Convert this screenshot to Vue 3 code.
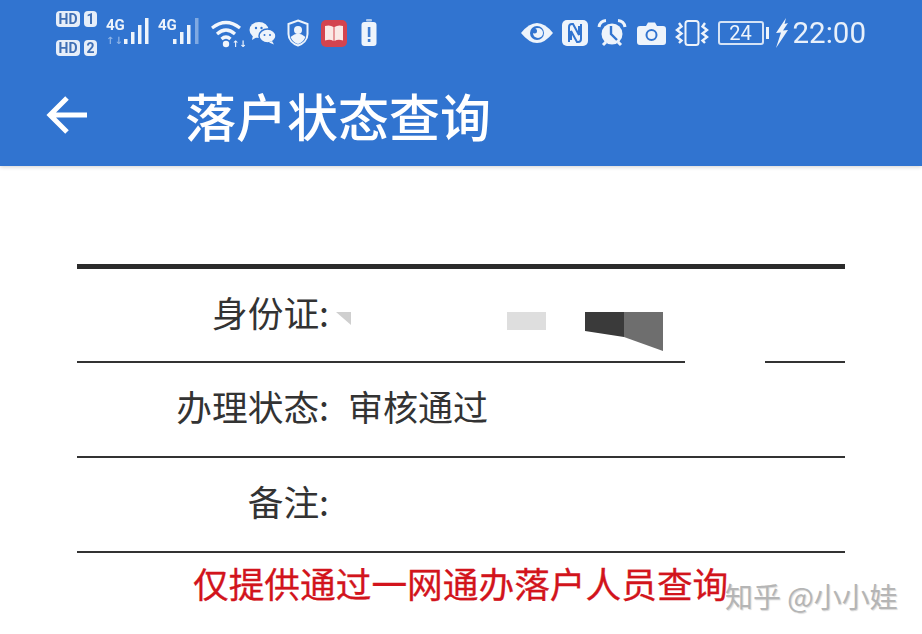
<script setup>
const rows = [
  { label: '身份证:', value: '' },
  { label: '办理状态:', value: '审核通过' },
  { label: '备注:', value: '' },
]
</script>

<template>
  <main class="page">
    <header class="head">
      <div class="status">
        <div class="left">
          <div class="sims">
            <div class="sim"><span class="hd">HD</span><span class="num">1</span></div>
            <div class="sim"><span class="hd">HD</span><span class="num">2</span></div>
          </div>
          <svg class="sig" width="46" height="36" viewBox="0 0 46 36">
            <text x="0" y="15" class="g">4G</text>
            <text x="0" y="29" class="arrows">↑↓</text>
            <g fill="#eef4fb">
              <rect x="18" y="24" width="3.500" height="5" />
              <rect x="25" y="17" width="3.500" height="12" />
              <rect x="32" y="10" width="3.500" height="19" />
              <rect x="39" y="3" width="3.500" height="26" />
            </g>
          </svg>
          <svg class="sig sig2" width="46" height="36" viewBox="0 0 46 36">
            <text x="0" y="15" class="g">4G</text>
            <g fill="#eef4fb">
              <rect x="15" y="24" width="3.500" height="5" />
              <rect x="22" y="17" width="3.500" height="12" />
              <rect x="29" y="10" width="3.500" height="19" />
            </g>
            <rect x="37" y="3" width="3.500" height="26" fill="#7fa9e2" />
          </svg>
          <svg class="wifi" width="36" height="30" viewBox="0 0 36 30">
            <g fill="none" stroke="#f2f6fc" stroke-width="3.200">
              <path d="M2 10Q16-1 30 10" />
              <path d="M7 16Q16 8 25 16" />
              <path d="M11.500 21Q16 17 20.500 21" />
            </g>
            <circle cx="16" cy="26" r="3.200" fill="#f2f6fc" />
            <text x="22" y="29" class="wifi-arrows">↑↓</text>
          </svg>
          <svg class="wechat" width="28" height="24" viewBox="0 0 28 24">
            <ellipse cx="10" cy="9" rx="9.500" ry="8" fill="#eef4fb" />
            <path d="M4 14l-1 5 5-3z" fill="#eef4fb" />
            <ellipse cx="18.500" cy="15" rx="8.500" ry="7" fill="#eef4fb" stroke="#3174d0" stroke-width="1.500" />
            <path d="M23 20l2 3.500-5-2z" fill="#eef4fb" />
            <g fill="#3174d0">
              <circle cx="7" cy="7" r="1.200" />
              <circle cx="12.500" cy="7" r="1.200" />
              <circle cx="15.500" cy="14" r="1" />
              <circle cx="21" cy="14" r="1" />
            </g>
          </svg>
          <svg class="shield" width="22" height="28" viewBox="0 0 22 28">
            <path d="M11 1.500L20.500 5V15C20.500 21 16 25 11 26.500 6 25 1.500 21 1.500 15V5Z" fill="none" stroke="#eef4fb" stroke-width="2" />
            <circle cx="11" cy="11" r="4" fill="#eef4fb" />
            <path d="M3.500 18Q11 11 18.500 18 16 23.500 11 25 6 23.500 3.500 18Z" fill="#eef4fb" />
          </svg>
          <svg class="book" width="26" height="27" viewBox="0 0 26 27">
            <rect width="26" height="27" rx="5" fill="#d3444f" />
            <path d="M4 6Q9 4.500 12.500 7V21Q9 19 4 20.500Z" fill="#fae9e6" />
            <path d="M22 6Q17 4.500 13.500 7V21Q17 19 22 20.500Z" fill="#fae9e6" />
          </svg>
          <svg class="batt" width="16" height="28" viewBox="0 0 16 28">
            <rect x="5" y="0" width="6" height="2.500" rx="1" fill="#a9c6ec" />
            <rect x="0.500" y="3" width="15" height="24" rx="3" fill="#eef4fb" />
            <rect x="6.800" y="8" width="2.600" height="10" fill="#3f7dd3" />
            <rect x="6.800" y="20" width="2.600" height="3" fill="#3f7dd3" />
          </svg>
        </div>
        <div class="right">
          <svg class="eye" width="34" height="22" viewBox="0 0 34 22">
            <path d="M1 11Q17-9 33 11 17 31 1 11Z" fill="#eef4fb" />
            <circle cx="17" cy="11" r="7" fill="#3174d0" />
            <circle cx="18" cy="11" r="5" fill="#eef4fb" />
            <circle cx="14.500" cy="9" r="2.500" fill="#3174d0" />
          </svg>
          <svg class="nfc" width="26" height="26" viewBox="0 0 26 26">
            <rect width="26" height="26" rx="5" fill="#eef4fb" />
            <path d="M7 22V7Q7 4 10 4H11L17 15V6" fill="none" stroke="#3174d0" stroke-width="2" />
            <path d="M19 4V19Q19 22 16 22H15L9 11V20" fill="none" stroke="#3174d0" stroke-width="2" />
          </svg>
          <svg class="alarm" width="30" height="28" viewBox="0 0 30 28">
            <circle cx="15" cy="15" r="10.500" fill="#eef4fb" />
            <path d="M14 7V15L20 21" fill="none" stroke="#3174d0" stroke-width="2.400" />
            <path d="M2 8Q3 2 9 1.500M28 8Q27 2 21 1.500" fill="none" stroke="#eef4fb" stroke-width="3" />
            <path d="M6 26l3-3M24 26l-3-3" stroke="#eef4fb" stroke-width="3" />
          </svg>
          <svg class="cam" width="29" height="23" viewBox="0 0 29 23">
            <path d="M3 4H9L11 0.500H18L20 4H26Q29 4 29 7V20Q29 23 26 23H3Q0 23 0 20V7Q0 4 3 4Z" fill="#eef4fb" />
            <circle cx="14.500" cy="13" r="5" fill="none" stroke="#3174d0" stroke-width="2" />
          </svg>
          <svg class="vib" width="34" height="26" viewBox="0 0 34 26">
            <rect x="10.500" y="1" width="13" height="24" rx="2.500" fill="none" stroke="#eef4fb" stroke-width="2" />
            <path d="M4 3L6.500 6.500 2 10 6.500 13.500 2 17 6.500 20.500 4 23" fill="none" stroke="#eef4fb" stroke-width="2.400" />
            <path d="M30 3L27.500 6.500 32 10 27.500 13.500 32 17 27.500 20.500 30 23" fill="none" stroke="#eef4fb" stroke-width="2.400" />
          </svg>
          <div class="level">
            <span class="cell">24</span>
            <span class="tip"></span>
          </div>
          <svg class="bolt" width="14" height="30" viewBox="0 0 14 30">
            <path d="M11 0L1 15 6 14.500 1 30 13 12 8 12.500 13 5 9.500 6Z" fill="#eef4fb" />
          </svg>
          <span class="time">22:00</span>
        </div>
      </div>
      <div class="bar">
        <svg class="back" width="42" height="38" viewBox="0 0 42 38">
          <path d="M41 19H5M21 2L4 19 21 36" fill="none" stroke="#fff" stroke-width="5" />
        </svg>
        <h1 class="title">落户状态查询</h1>
      </div>
    </header>

    <section class="info">
      <div v-for="(row, i) in rows" :key="i" class="row">
        <span class="label">{{ row.label }}</span>
        <span class="value">{{ row.value }}</span>
      </div>
      <svg class="mask" width="530" height="90" viewBox="0 0 530 90">
        <path d="M16 22H31V35Z" fill="#cfcfcf" />
        <rect x="187" y="22" width="39" height="18" fill="#dedede" />
        <path d="M265 22H304V47L265 41Z" fill="#3a3a3a" />
        <path d="M304 22H343V61L304 47Z" fill="#6e6e6e" />
        <rect x="365" y="66" width="80" height="8" fill="#fff" />
      </svg>
    </section>

    <p class="notice">仅提供通过一网通办落户人员查询</p>
    <span class="mark">知乎 @小小娃</span>
  </main>
</template>

<style scoped>
.page {
  position: relative;
  width: 922px;
  height: 634px;
  overflow: hidden;
  background: #fff;
  font-family: "Noto Sans CJK SC", "Noto Sans", sans-serif;
}
.head {
  height: 166px;
  background: #3174d0;
  box-shadow: 0 1px 4px rgba(0, 0, 0, 0.18);
}
.status {
  height: 66px;
  padding: 0 56px;
  display: flex;
  justify-content: space-between;
  align-items: center;
  filter: blur(0.4px);
}
.left,
.right {
  display: flex;
  align-items: center;
}
.sims {
  display: flex;
  flex-direction: column;
  gap: 13px;
}
.sim {
  display: flex;
  gap: 4px;
}
.hd,
.num {
  height: 16px;
  background: #e6eef9;
  color: #3f6fb5;
  font: 700 14px/16px "Roboto", sans-serif;
  border-radius: 4px;
  text-align: center;
}
.hd {
  width: 24px;
}
.num {
  width: 13px;
}
.sig {
  margin-left: 9px;
}
.sig2 {
  margin-left: 6px;
}
.g {
  font: 700 15px "Roboto", sans-serif;
  fill: #eef4fb;
}
.arrows {
  font: 700 10px "DejaVu Sans", sans-serif;
  fill: #8fb4e6;
}
.wifi-arrows {
  font: 700 9px "DejaVu Sans", sans-serif;
  fill: #f2f6fc;
}
.wifi {
  margin-left: 6px;
}
.wechat {
  margin-left: 3px;
}
.shield {
  margin-left: 10px;
}
.book {
  margin-left: 12px;
}
.batt {
  margin-left: 14px;
}
.right svg {
  flex: none;
}
.nfc {
  margin-left: 8px;
}
.alarm {
  margin-left: 9px;
}
.cam {
  margin-left: 10px;
}
.vib {
  margin-left: 9px;
}
.level {
  margin-left: 9px;
  display: flex;
  align-items: center;
  gap: 2px;
}
.cell {
  width: 46px;
  height: 24px;
  box-sizing: border-box;
  border: 2px solid #d5e3f6;
  border-radius: 3px;
  color: #eef4fb;
  text-align: center;
  font: 400 20px/20px "Roboto", sans-serif;
}
.tip {
  width: 3px;
  height: 12px;
  background: #eef4fb;
}
.bolt {
  margin-left: 6px;
}
.time {
  margin-left: 4px;
  color: #e8f0fa;
  font: 400 29.500px/34px "Roboto", sans-serif;
}
.bar {
  height: 100px;
  padding-left: 46px;
  display: flex;
  align-items: center;
  gap: 97px;
}
.back {
  flex: none;
  margin-top: -3px;
}
.title {
  margin: -3px 0 0;
  color: #fff;
  font-size: 51px;
  font-weight: 500;
  line-height: 60px;
  white-space: nowrap;
}
.info {
  position: relative;
  margin: 98px 77px 0;
  border-top: 5px solid #2b2b2b;
}
.row {
  box-sizing: border-box;
  height: 95px;
  padding-bottom: 8px;
  border-bottom: 2px solid #333;
  display: flex;
  align-items: center;
  font-size: 35.700px;
  color: #333;
}
.row:first-child {
  height: 94px;
}
.label {
  width: 252px;
  text-align: right;
  white-space: nowrap;
}
.value {
  margin-left: 19px;
  font-size: 35px;
}
.mask {
  position: absolute;
  left: 243px;
  top: 21px;
}
.notice {
  margin: 7px 0 0 193px;
  color: #d2141c;
  font-size: 35.700px;
  font-weight: 400;
  -webkit-text-stroke: 0.3px #d2141c;
  line-height: 46px;
  white-space: nowrap;
}
.mark {
  position: absolute;
  left: 725px;
  top: 576px;
  color: #b5b5b5;
  font-size: 28px;
  line-height: 40px;
  white-space: nowrap;
  text-shadow: 1px 1px 1px rgba(0, 0, 0, 0.15);
}
</style>
